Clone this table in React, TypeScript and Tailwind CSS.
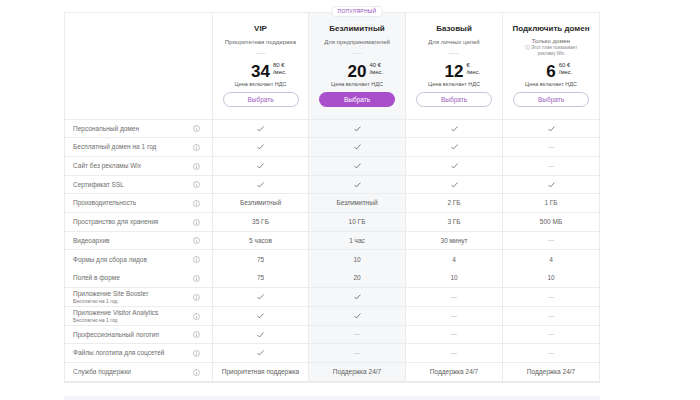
import React from "react";

type Plan = {
  name: string;
  sub: string;
  price: string;
  cents: string;
  highlight?: boolean;
  notice?: boolean;
};

const plans: Plan[] = [
  { name: "VIP", sub: "Приоритетная поддержка", price: "34", cents: "80 €" },
  { name: "Безлимитный", sub: "Для предпринимателей", price: "20", cents: "40 €", highlight: true },
  { name: "Базовый", sub: "Для личных целей", price: "12", cents: "€" },
  { name: "Подключить домен", sub: "Только домен", price: "6", cents: "60 €", notice: true },
];

type Row = { label: string; note?: string; values: string[]; h: string; noBorder?: boolean };

const rows: Row[] = [
  { label: "Персональный домен", values: ["c", "c", "c", "c"], h: "h-[18px]" },
  { label: "Бесплатный домен на 1 год", values: ["c", "c", "c", "-"], h: "h-[19px]" },
  { label: "Сайт без рекламы Wix", values: ["c", "c", "c", "-"], h: "h-[19px]" },
  { label: "Сертификат SSL", values: ["c", "c", "c", "c"], h: "h-[18px]" },
  { label: "Производительность", values: ["Безлимитный", "Безлимитный", "2 ГБ", "1 ГБ"], h: "h-[19px]" },
  { label: "Пространство для хранения", values: ["35 ГБ", "10 ГБ", "3 ГБ", "500 МБ"], h: "h-[19px]" },
  { label: "Видеоархив", values: ["5 часов", "1 час", "30 минут", "-"], h: "h-[18px]" },
  { label: "Формы для сбора лидов", values: ["75", "10", "4", "4"], h: "h-[19px]", noBorder: true },
  { label: "Полей в форме", values: ["75", "20", "10", "10"], h: "h-[19px]" },
  { label: "Приложение Site Booster", note: "Бесплатно на 1 год", values: ["c", "c", "-", "-"], h: "h-[19px]" },
  { label: "Приложение Visitor Analytics", note: "Бесплатно на 1 год", values: ["c", "c", "-", "-"], h: "h-[19px]" },
  { label: "Профессиональный логотип", values: ["c", "-", "-", "-"], h: "h-[18px]" },
  { label: "Файлы логотипа для соцсетей", values: ["c", "-", "-", "-"], h: "h-[19px]" },
  { label: "Служба поддержки", values: ["Приоритетная поддержка", "Поддержка 24/7", "Поддержка 24/7", "Поддержка 24/7"], h: "h-[19px]" },
];

function InfoIcon() {
  return (
    <svg width="7" height="7" viewBox="0 0 14 14" className="shrink-0">
      <circle cx="7" cy="7" r="6" fill="none" stroke="#a0a0a0" strokeWidth="1.2" />
      <line x1="7" y1="6" x2="7" y2="10.5" stroke="#a0a0a0" strokeWidth="1.3" />
      <circle cx="7" cy="4" r="0.9" fill="#a0a0a0" />
    </svg>
  );
}

function Check() {
  return (
    <svg width="7" height="6" viewBox="0 0 14 12">
      <path d="M1.5 6.5 L5 10 L12.5 1.5" fill="none" stroke="#444" strokeWidth="1.3" strokeLinecap="round" strokeLinejoin="round" />
    </svg>
  );
}

function Value({ v }: { v: string }) {
  if (v === "c") return <Check />;
  if (v === "-") return <div className="w-[6px] h-px bg-[#dadada]" />;
  return <span className="text-[6.5px] text-[#606060]">{v}</span>;
}

const grid = "grid grid-cols-[147px_96px_97px_97px_97px]";

export default function App() {
  return (
    <div className="w-[700px] h-[400px] bg-white overflow-hidden font-['Liberation_Sans',Arial,sans-serif]">
      <div className="pt-3 pl-16">
        <div className="w-[536px] border border-[#ececec]">
          {/* header */}
          <div className={grid}>
            <div className="h-[107px] border-b border-[#ececec]" />
            {plans.map((p) => (
              <div
                key={p.name}
                className={
                  "relative h-[107px] border-b border-l border-[#ececec] flex flex-col items-center pt-[10px] " +
                  (p.highlight ? "bg-[#f6f7f9]" : "bg-white")
                }
              >
                {p.highlight && (
                  <div className="absolute left-1/2 -translate-x-1/2 -top-[7px] h-[11px] px-[5px] flex items-center bg-white border border-[#ececec] rounded-[3px]">
                    <span className="text-[5px] tracking-[0.3px] text-[#9146b5] uppercase">популярный</span>
                  </div>
                )}
                <div className="h-[12px] leading-[12px] text-[8px] font-bold text-[#2a2a2a]">{p.name}</div>
                {p.notice ? (
                  <div className="mt-[2px] h-[23px] flex flex-col items-center">
                    <div className="h-[8px] leading-[8px] text-[6px] text-[#666]">{p.sub}</div>
                    <div className="text-[4.5px] leading-[6px] text-[#8a8a8a] text-center">
                      ⓘ Этот план показывает
                      <br />
                      рекламу Wix
                    </div>
                  </div>
                ) : (
                  <>
                    <div className="mt-[2px] h-[10px] leading-[10px] text-[6px] text-[#666]">{p.sub}</div>
                    <div className="h-[13px] flex items-center">
                      <div className="w-[10px] h-px bg-[#e6e6e6]" />
                    </div>
                  </>
                )}
                <div className="h-[18px] flex justify-center">
                  <div className="relative">
                    <span className="text-[17px] leading-[18px] font-bold text-[#111]">{p.price}</span>
                    <div className="absolute left-full top-0 ml-[3px] pt-[2px] flex flex-col text-[6px] leading-[7px] text-[#333] whitespace-nowrap">
                      <span>{p.cents}</span>
                      <span>/мес.</span>
                    </div>
                  </div>
                </div>
                <div className="mt-[2px] h-[8px] leading-[8px] text-[5.5px] text-[#555]">Цена включает НДС</div>
                <div
                  className={
                    "mt-[4px] w-[76px] h-[15px] rounded-full flex items-center justify-center text-[6.5px] " +
                    (p.highlight
                      ? "bg-[#a94fcb] text-white"
                      : "border border-[#cdbfd8] text-[#a060c0] bg-white")
                  }
                >
                  Выбрать
                </div>
              </div>
            ))}
          </div>
          {/* rows */}
          {rows.map((r, i) => (
            <div key={i} className={grid}>
              <div
                className={
                  r.h +
                  " flex items-center justify-between pl-[8px] pr-[12px] " +
                  (r.noBorder ? "" : "border-b border-[#ececec]")
                }
              >
                <div className="flex flex-col">
                  <span className="text-[6.5px] leading-[8px] text-[#6e6e6e]">{r.label}</span>
                  {r.note && <span className="text-[5px] leading-[6px] text-[#7a7a7a]">{r.note}</span>}
                </div>
                <InfoIcon />
              </div>
              {r.values.map((v, j) => (
                <div
                  key={j}
                  className={
                    r.h +
                    " flex items-center justify-center border-l border-[#ececec] " +
                    (r.noBorder ? "" : "border-b ") +
                    (j === 1 ? "bg-[#f6f7f9]" : "")
                  }
                >
                  <Value v={v} />
                </div>
              ))}
            </div>
          ))}
        </div>
        <div className="mt-[13px] w-[536px] h-[20px] bg-[#f4f3fc]" />
      </div>
    </div>
  );
}
